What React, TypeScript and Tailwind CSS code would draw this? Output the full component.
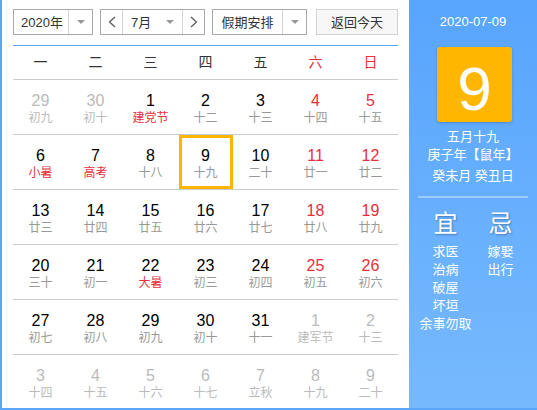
import React from 'react';

type Day = {
    d: number;
    lunar: string;
    other?: boolean;
    festival?: boolean;
};

const WEEK = ['一', '二', '三', '四', '五', '六', '日'];

// July 2020, week starts on Monday
const DAYS: Day[] = [
    { d: 29, lunar: '初九', other: true },
    { d: 30, lunar: '初十', other: true },
    { d: 1, lunar: '建党节', festival: true },
    { d: 2, lunar: '十二' },
    { d: 3, lunar: '十三' },
    { d: 4, lunar: '十四' },
    { d: 5, lunar: '十五' },

    { d: 6, lunar: '小暑', festival: true },
    { d: 7, lunar: '高考', festival: true },
    { d: 8, lunar: '十八' },
    { d: 9, lunar: '十九' },
    { d: 10, lunar: '二十' },
    { d: 11, lunar: '廿一' },
    { d: 12, lunar: '廿二' },

    { d: 13, lunar: '廿三' },
    { d: 14, lunar: '廿四' },
    { d: 15, lunar: '廿五' },
    { d: 16, lunar: '廿六' },
    { d: 17, lunar: '廿七' },
    { d: 18, lunar: '廿八' },
    { d: 19, lunar: '廿九' },

    { d: 20, lunar: '三十' },
    { d: 21, lunar: '初一' },
    { d: 22, lunar: '大暑', festival: true },
    { d: 23, lunar: '初三' },
    { d: 24, lunar: '初四' },
    { d: 25, lunar: '初五' },
    { d: 26, lunar: '初六' },

    { d: 27, lunar: '初七' },
    { d: 28, lunar: '初八' },
    { d: 29, lunar: '初九' },
    { d: 30, lunar: '初十' },
    { d: 31, lunar: '十一' },
    { d: 1, lunar: '建军节', other: true },
    { d: 2, lunar: '十三', other: true },

    { d: 3, lunar: '十四', other: true },
    { d: 4, lunar: '十五', other: true },
    { d: 5, lunar: '十六', other: true },
    { d: 6, lunar: '十七', other: true },
    { d: 7, lunar: '立秋', other: true },
    { d: 8, lunar: '十九', other: true },
    { d: 9, lunar: '二十', other: true },
];

const SELECTED_INDEX = 10;

const YI = ['求医', '治病', '破屋', '坏垣', '余事勿取'];
const JI = ['嫁娶', '出行'];

function Caret() {
    return (
        <svg width="8" height="4" viewBox="0 0 8 4">
            <path d="M0 0h8L4 4z" fill="#999" />
        </svg>
    );
}

function Chevron({ dir }: { dir: 'left' | 'right' }) {
    return (
        <svg width="8" height="12" viewBox="0 0 8 12">
            <polyline
                points={dir === 'left' ? '7,1 1.5,6 7,11' : '1,1 6.5,6 1,11'}
                fill="none"
                stroke="#555"
                strokeWidth="1.2"
            />
        </svg>
    );
}

function Toolbar() {
    return (
        <div className="flex h-[26px] text-[13px] text-[#333] leading-none">
            {/* Year select */}
            <div className="w-[80px] flex border border-[#a9a9a9] bg-white">
                <div className="w-[55px] flex items-center justify-center border-r border-[#d4d4d4] pl-[2px]">
                    2020年
                </div>
                <div className="flex-1 flex items-center justify-center">
                    <Caret />
                </div>
            </div>

            {/* Month select */}
            <div className="w-[105px] ml-[7px] flex border border-[#a9a9a9] bg-white">
                <div className="w-[22px] flex items-center justify-center border-r border-[#d4d4d4]">
                    <Chevron dir="left" />
                </div>
                <div className="w-[60px] flex items-center border-r border-[#d4d4d4] pl-[8px] pr-[8px] justify-between">
                    <span>7月</span>
                    <Caret />
                </div>
                <div className="flex-1 flex items-center justify-center">
                    <Chevron dir="right" />
                </div>
            </div>

            {/* Holiday select */}
            <div className="w-[95px] ml-[7px] flex border border-[#a9a9a9] bg-white">
                <div className="w-[70px] flex items-center justify-center border-r border-[#d4d4d4]">
                    假期安排
                </div>
                <div className="flex-1 flex items-center justify-center">
                    <Caret />
                </div>
            </div>

            <button className="w-[82px] ml-[9px] border border-[#d2d2d2] bg-[#f7f7f7] text-[#333] flex items-center justify-center">
                返回今天
            </button>
        </div>
    );
}

function DayCell({ day, index }: { day: Day; index: number }) {
    const col = index % 7;
    const weekend = col >= 5;

    let numColor = 'text-black';
    if (day.other) numColor = 'text-[#bbb]';
    else if (weekend) numColor = 'text-[#e8303a]';

    let lunarColor = 'text-[#999]';
    if (day.other) lunarColor = 'text-[#bbb]';
    else if (day.festival) lunarColor = 'text-[#e8303a]';

    return (
        <div className="relative flex flex-col items-center pt-[12px]">
            <div className={`text-[16px] leading-[18px] ${numColor}`}>{day.d}</div>
            <div className={`text-[12px] leading-[14px] mt-[1px] ${lunarColor}`}>{day.lunar}</div>
            {index === SELECTED_INDEX && (
                <div className="absolute top-0 left-[1px] w-[54px] h-[54px] border-[3px] border-[#ffb400]" />
            )}
        </div>
    );
}

function Calendar() {
    const rows: Day[][] = [];
    for (let i = 0; i < DAYS.length; i += 7) rows.push(DAYS.slice(i, i + 7));

    return (
        <div className="w-[407px] px-[11px] pt-[9px] flex flex-col">
            <Toolbar />

            <div className="mt-[10px] h-px bg-[#5ba6f8]" />

            {/* Week header */}
            <div className="grid grid-cols-7 h-[34px] border-b border-[#ccc] text-[14px]">
                {WEEK.map((w, i) => (
                    <div
                        key={w}
                        className={`flex items-center justify-center ${i >= 5 ? 'text-[#e8303a]' : 'text-[#333]'}`}
                    >
                        {w}
                    </div>
                ))}
            </div>

            {/* Days */}
            {rows.map((row, r) => (
                <div
                    key={r}
                    className={`grid grid-cols-7 ${r < rows.length - 1 ? 'h-[55px] border-b border-[#ccc]' : 'h-[53px]'}`}
                >
                    {row.map((day, c) => (
                        <DayCell key={c} day={day} index={r * 7 + c} />
                    ))}
                </div>
            ))}
        </div>
    );
}

function SidePanel() {
    return (
        <div className="w-[128px] bg-linear-to-b from-[#58a5fe] to-[#76b9fd] flex flex-col items-center text-white">
            <div className="mt-[13px] text-[13px] leading-[18px]">2020-07-09</div>

            <div className="mt-[16px] ml-[3px] w-[75px] h-[75px] rounded-[3px] bg-[#ffb600] shadow-[0_1px_3px_rgba(0,0,0,0.2)] flex items-center justify-center pt-[8px]">
                <span className="text-[62px] leading-none">9</span>
            </div>

            <div className="mt-[6px] text-[13px] leading-[18px]">五月十九</div>
            <div className="text-[13px] leading-[18px]">庚子年【鼠年】</div>
            <div className="mt-[3px] text-[13px] leading-[18px]">癸未月 癸丑日</div>

            <div className="mt-[11px] w-[110px] h-[2px] bg-white/35" />

            <div className="mt-[12px] w-[110px] grid grid-cols-2">
                <div className="flex flex-col items-center">
                    <div className="text-[24px] leading-[28px] [text-shadow:1px_1px_2px_rgba(0,0,0,0.3)]">宜</div>
                    <div className="mt-[5px] flex flex-col items-center text-[13px] leading-[18px]">
                        {YI.map((t) => (
                            <div key={t} className="whitespace-nowrap">{t}</div>
                        ))}
                    </div>
                </div>
                <div className="flex flex-col items-center">
                    <div className="text-[24px] leading-[28px] [text-shadow:1px_1px_2px_rgba(0,0,0,0.3)]">忌</div>
                    <div className="mt-[5px] flex flex-col items-center text-[13px] leading-[18px]">
                        {JI.map((t) => (
                            <div key={t} className="whitespace-nowrap">{t}</div>
                        ))}
                    </div>
                </div>
            </div>
        </div>
    );
}

export default function App() {
    return (
        <div className="w-[537px] h-[410px] flex border-l-2 border-b-2 border-[#5ba6f8] bg-white overflow-hidden font-['Liberation_Sans','Noto_Sans_CJK_SC',sans-serif]">
            <Calendar />
            <SidePanel />
        </div>
    );
}
